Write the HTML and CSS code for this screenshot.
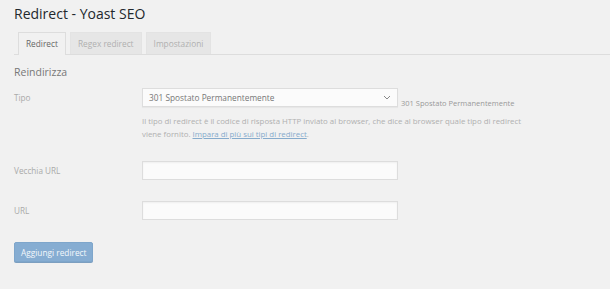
FILE: index.html
```html
<!DOCTYPE html>
<html lang="it">
<head>
  <meta charset="UTF-8" />
  <meta name="viewport" content="width=device-width, initial-scale=1.0" />
  <title>Redirect - Yoast SEO</title>
  <link rel="stylesheet" href="styles.css">
</head>
<body>
  <div class="wrap">
    <h1>Redirect - Yoast SEO</h1>

    <nav class="tabs">
      <a class="tab active" href="#">Redirect</a>
      <a class="tab" href="#">Regex redirect</a>
      <a class="tab" href="#">Impostazioni</a>
    </nav>

    <h2>Reindirizza</h2>

    <div class="row row-type">
      <label>Tipo</label>
      <div class="field">
        <div class="select-line">
          <div class="select">
            <span>301 Spostato Permanentemente</span>
            <svg class="chevron" width="8" height="5" viewBox="0 0 8 5">
              <path d="M1 1 L4 4 L7 1" fill="none" stroke="#888" stroke-width="1" />
            </svg>
          </div>
          <span class="note">301 Spostato Permanentemente</span>
        </div>
        <p class="desc">Il tipo di redirect è il codice di risposta HTTP inviato al browser, che dice al browser quale tipo di redirect viene fornito. <a href="#">Impara di più sui tipi di redirect</a>.</p>
      </div>
    </div>

    <div class="row">
      <label>Vecchia URL</label>
      <div class="field"><input class="text" type="text"></div>
    </div>

    <div class="row row-url">
      <label>URL</label>
      <div class="field"><input class="text" type="text"></div>
    </div>

    <button class="btn">Aggiungi redirect</button>
  </div>
</body>
</html>
```

FILE: styles.css
```css
body {
  margin: 0;
  padding: 0;
  background: #f1f1f1;
  font-family: "Open Sans", sans-serif;
  color: #555;
  height: 289px;
  overflow: hidden;
}
.wrap {
  padding: 0 0 0 14px;
}
h1 {
  margin: 0;
  padding-top: 4px;
  font-size: 14px;
  font-weight: 400;
  line-height: 20px;
  color: #23282d;
}
.tabs {
  display: flex;
  gap: 4px;
  margin-top: 8px;
  padding-left: 4px;
  border-bottom: 1px solid #ddd;
  height: 22px;
}
.tab {
  display: block;
  height: 21px;
  line-height: 21px;
  padding: 0 7px;
  font-size: 8.3px;
  color: #b0b0b0;
  text-decoration: none;
  background: #e6e6e6;
  border: 1px solid #e3e3e3;
  border-bottom: none;
}
.tab.active {
  background: #f1f1f1;
  color: #666;
  border-color: #ddd;
  height: 22px;
  margin-bottom: -1px;
}
h2 {
  margin: 9px 0 0;
  font-size: 10.5px;
  font-weight: 400;
  line-height: 16px;
  color: #777;
}
.row {
  display: flex;
  margin-top: 20px;
}
.row-type {
  margin-top: 8px;
}
.row-url {
  margin-top: 21px;
}
.row label {
  width: 128px;
  font-size: 8.2px;
  color: #aaa;
  line-height: 19px;
}
.field {
  flex: none;
}
.select-line {
  display: flex;
  align-items: flex-end;
}
.select {
  box-sizing: border-box;
  width: 256px;
  height: 19px;
  display: flex;
  align-items: center;
  justify-content: space-between;
  padding: 0 6px 0 6px;
  background: #fbfbfb;
  border: 1px solid #ddd;
  box-shadow: 0 1px 1px rgba(0,0,0,0.04);
  font-size: 8.3px;
  color: #777;
}
.note {
  margin-left: 3px;
  font-size: 7.5px;
  color: #999;
  line-height: 12px;
  margin-bottom: -2px;
}
.desc {
  margin: 8px 0 0;
  width: 394px;
  font-size: 7.85px;
  line-height: 13px;
  color: #b0b0b0;
}
.desc a {
  color: #86abcc;
}
.text {
  box-sizing: border-box;
  display: block;
  width: 256px;
  height: 19px;
  margin: 0;
  background: #fbfbfb;
  border: 1px solid #ddd;
  box-shadow: inset 0 1px 2px rgba(0,0,0,0.05);
}
.btn {
  display: block;
  margin-top: 22px;
  height: 20px;
  padding: 0 6px;
  background: #86add2;
  border: 1px solid #7ea6cb;
  border-radius: 2px;
  color: #f4f8fb;
  font-family: "Open Sans", sans-serif;
  font-size: 8.3px;
  box-shadow: 0 1px 0 #7c9fc0;
}
```
